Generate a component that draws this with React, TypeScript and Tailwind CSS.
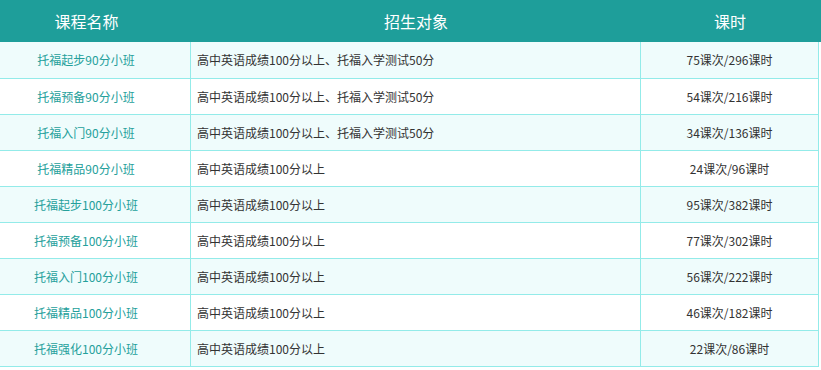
import React from 'react';

interface Course {
  name: string;
  target: string;
  hours: string;
}

const courses: Course[] = [
  { name: '托福起步90分小班', target: '高中英语成绩100分以上、托福入学测试50分', hours: '75课次/296课时' },
  { name: '托福预备90分小班', target: '高中英语成绩100分以上、托福入学测试50分', hours: '54课次/216课时' },
  { name: '托福入门90分小班', target: '高中英语成绩100分以上、托福入学测试50分', hours: '34课次/136课时' },
  { name: '托福精品90分小班', target: '高中英语成绩100分以上', hours: '24课次/96课时' },
  { name: '托福起步100分小班', target: '高中英语成绩100分以上', hours: '95课次/382课时' },
  { name: '托福预备100分小班', target: '高中英语成绩100分以上', hours: '77课次/302课时' },
  { name: '托福入门100分小班', target: '高中英语成绩100分以上', hours: '56课次/222课时' },
  { name: '托福精品100分小班', target: '高中英语成绩100分以上', hours: '46课次/182课时' },
  { name: '托福强化100分小班', target: '高中英语成绩100分以上', hours: '22课次/86课时' },
];

const App: React.FC = () => {
  return (
    <div
      className="w-[821px] h-[370px] bg-white overflow-hidden"
      style={{ fontFamily: '"Noto Sans CJK SC", "Microsoft YaHei", sans-serif' }}
    >
      {/* header */}
      <div className="flex h-[42px] w-full bg-[#1e9e9a] text-white text-[16px] items-center">
        <div className="w-[191px] pr-[18px] text-center">课程名称</div>
        <div className="w-[450px] text-center">招生对象</div>
        <div className="w-[178px] text-center">课时</div>
      </div>

      {/* rows */}
      <div className="w-[819px]">
        {courses.map((c, i) => (
          <div
            key={i}
            className={`flex border-b border-[#93ebe9] text-[12px] ${i === 0 ? 'h-[37px]' : 'h-[36px]'} ${
              i % 2 === 0 ? 'bg-[#effcfc]' : 'bg-white'
            }`}
          >
            <div className="w-[191px] pr-[18px] flex items-center justify-center border-r border-[#93ebe9] text-[#24a09b]">
              {c.name}
            </div>
            <div className="w-[450px] flex items-center pl-[6px] border-r border-[#93ebe9] text-[#333333]">
              {c.target}
            </div>
            <div className="w-[178px] flex items-center justify-center border-r border-[#93ebe9] text-[#333333]">
              {c.hours}
            </div>
          </div>
        ))}
      </div>
    </div>
  );
};

export default App;
